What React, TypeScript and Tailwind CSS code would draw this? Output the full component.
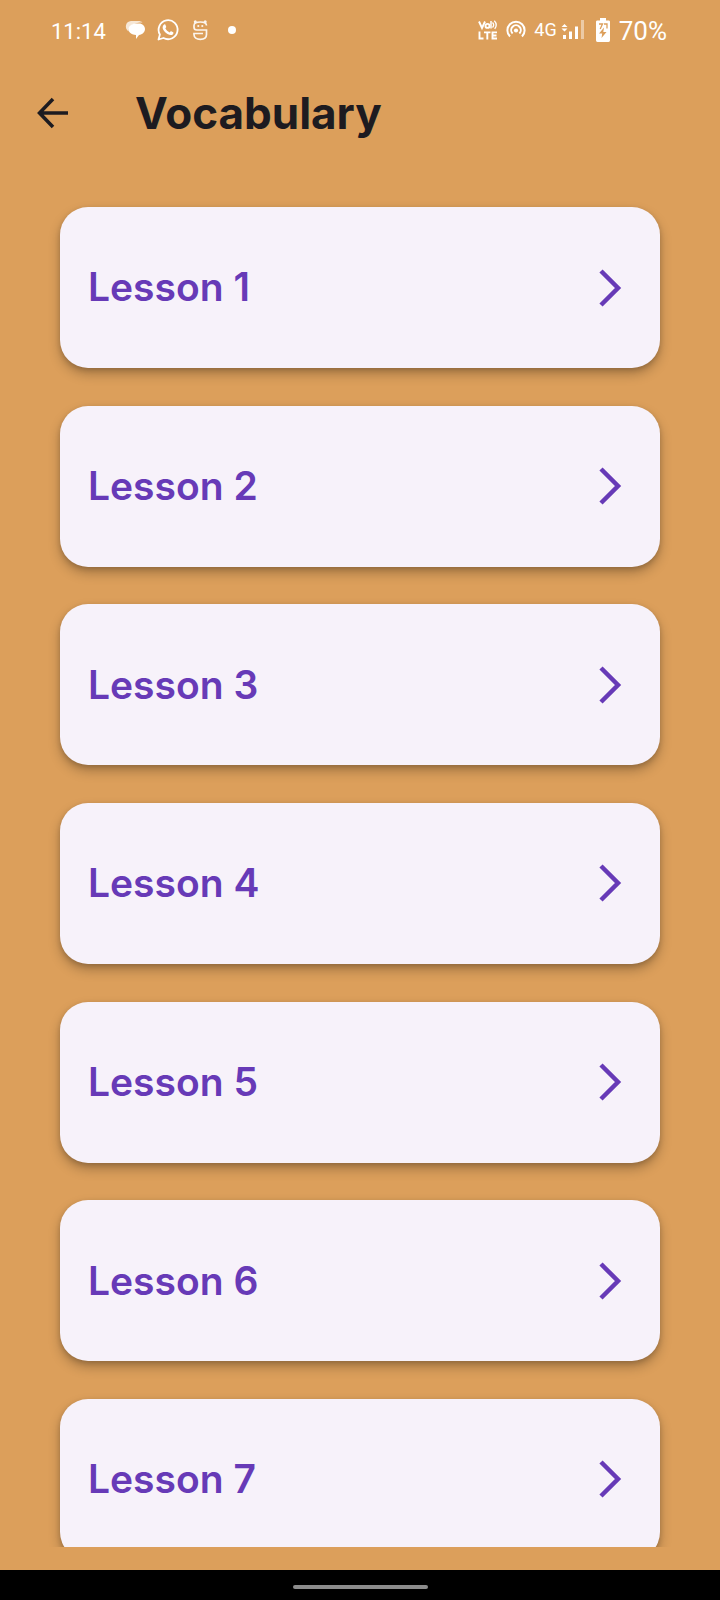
import React from "react";

const lessons = [1, 2, 3, 4, 5, 6, 7];

function ChatIcon() {
  return (
    <svg className="h-6 w-6" viewBox="0 0 24 24" fill="#fff" aria-hidden="true">
      <path d="M4.500 13.500C0 10 1.500 3.500 7 3h7c2 0 3.500.5 4.500 1.500C11 4.500 4.500 7 4.500 13.500z" opacity=".75" />
      <path d="M11.500 5.500H15c3.500 0 6 2.500 6 5.500s-2.500 5.500-6 5.900L12 21v-4C8 16.800 4.500 14.500 4.500 11.300S8 5.500 11.500 5.500z" />
    </svg>
  );
}

function WhatsAppIcon() {
  return (
    <svg className="h-6 w-6" viewBox="0 0 24 24" fill="none" stroke="#fff" aria-hidden="true">
      <path d="M2.500 21.500l1.400-5A9.500 9.500 0 1 1 7.500 20z" strokeWidth="1.800" strokeLinejoin="round" />
      <path
        d="M8.200 6.500c.5-.3 1-.2 1.200.3l.8 1.900c.1.300 0 .6-.9 1.600 1 2 2.300 3.200 4.300 4.100.9-1.100 1.200-1.400 1.600-1.200l2 1c.4.200.3 1.600-.5 2.200-1.200 1-3 .8-5.200-.4-2.500-1.400-4.400-4-4.800-5.800-.3-1.600.6-3.200 1.500-3.700z"
        fill="#fff"
        stroke="none"
      />
    </svg>
  );
}

function MascotIcon() {
  return (
    <svg className="h-6 w-6" viewBox="0 0 24 24" fill="none" stroke="#fff" strokeWidth="1.700" opacity=".9" aria-hidden="true">
      <path d="M18.500 7.500C18.500 5 16 4 12.300 4S6 5 6 7.500v1.800c0 1.700 1 2.700 2.800 2.700h9.700v4.500c0 3-2.500 4.800-6.200 4.800S6 19.500 6 16.500V15.500h9" />
      <circle cx="7.300" cy="3.800" r="1.500" fill="#fff" stroke="none" />
      <circle cx="17.200" cy="3.800" r="1.500" fill="#fff" stroke="none" />
      <circle cx="10.300" cy="8" r="1.100" fill="#fff" stroke="none" />
      <circle cx="14.300" cy="8" r="1.100" fill="#fff" stroke="none" />
    </svg>
  );
}

function HotspotIcon() {
  return (
    <svg className="h-5 w-5" viewBox="0 0 20 20" fill="none" stroke="#fff" strokeWidth="2" aria-hidden="true">
      <path d="M4 16.500a8.600 8.600 0 1 1 12 0" />
      <path d="M6.600 13.500a4.800 4.800 0 1 1 6.800 0" />
      <circle cx="10" cy="10.500" r="2.100" fill="#fff" stroke="none" />
    </svg>
  );
}

function VoLteIcon() {
  return (
    <svg className="h-5 w-5" viewBox="0 0 20 20" fill="none" stroke="#fff" strokeWidth="1.900" aria-label="VoLTE" role="img">
      <path d="M1 1.500L4 8l3-6.500" />
      <circle cx="9.500" cy="5.900" r="2" />
      <path d="M13 1v7.500" strokeWidth="1.500" />
      <path d="M14.500 2.500c1.500 1.600 1.500 3.400 0 5M16.300.8c2.600 2.800 2.600 5.200.4 8" strokeWidth="1.300" />
      <path d="M1.500 11.500v7h4M6 12.400h6.500M9.300 12.400V19.500M19 12.400h-4.500v6.100H19M14.500 15.500h4" />
    </svg>
  );
}

function SignalIcon() {
  return (
    <svg className="h-5 w-6" viewBox="0 0 24 20" fill="#fff" aria-hidden="true">
      <path d="M.5 7L3.500 4l3 3zM.5 8.500h6l-3 3zM2 15h3v4H2zM8 11.500h3V19H8zM14 6.500h3V19h-3z" />
      <path d="M20 0h3v19h-3z" opacity=".45" />
    </svg>
  );
}

function BatteryIcon() {
  return (
    <svg className="h-6 w-4" viewBox="0 0 16 24" aria-hidden="true">
      <path d="M5 0h6v2.500h2.500c1 0 1.500.5 1.500 1.500v18c0 1-.5 2-1.500 2h-11C1.500 24 1 23 1 22V4c0-1 .5-1.500 1.500-1.500H5z" fill="#fff" />
      <path d="M9 9.500L4 15.500h3.200L6.500 20l5-6H8.300z" fill="#dc9f5b" />
      <path d="M4 6h3.500L5.200 11M9 6h3v4.500" fill="none" stroke="#dc9f5b" strokeWidth="1.300" />
    </svg>
  );
}

function StatusBar() {
  return (
    <div className="flex h-[60px] shrink-0 items-center justify-between pr-[53px] pl-[51px] font-[Roboto,sans-serif] text-white">
      <div className="flex items-center">
        <time className="pt-0.5 text-[22px]">11:14</time>
        <div className="ml-[18px] flex items-center gap-2">
          <ChatIcon />
          <WhatsAppIcon />
          <MascotIcon />
          <span className="ml-2 h-2 w-2 rounded-full bg-white" />
        </div>
      </div>
      <div className="flex items-center">
        <VoLteIcon />
        <span className="ml-2 flex"><HotspotIcon /></span>
        <span className="ml-2 text-lg">4G</span>
        <span className="ml-1 flex"><SignalIcon /></span>
        <span className="ml-2.5 flex"><BatteryIcon /></span>
        <span className="ml-2 pt-0.5 text-[26px]">70%</span>
      </div>
    </div>
  );
}

function LessonCard({ number }: { number: number }) {
  return (
    <li>
      <button
        type="button"
        className="flex h-[161px] w-full items-center justify-between rounded-[28px] bg-[#f7f2fa] pr-[38px] pl-7 text-left text-[39px] font-semibold text-[#673ab7] shadow-[0_6px_12px_rgba(0,0,0,0.25),0_2px_5px_rgba(0,0,0,0.15)]"
      >
        <span>Lesson {number}</span>
        <svg className="h-10 w-6" viewBox="0 0 24 40" fill="none" stroke="currentColor" strokeWidth="4.500" aria-hidden="true">
          <path d="M3 3l17 17L3 37" />
        </svg>
      </button>
    </li>
  );
}

export default function App() {
  return (
    <div className="flex h-screen flex-col bg-[#dc9f5b] font-[Inter,sans-serif]">
      <StatusBar />
      <header className="flex h-[106px] shrink-0 items-center px-9">
        <button type="button" aria-label="Back" className="flex h-8 w-8 items-center justify-center text-[#1d1b20]">
          <svg className="h-8 w-8" viewBox="0 0 32 32" fill="none" stroke="currentColor" strokeWidth="3.500" aria-hidden="true">
            <path d="M17 2L3.500 16 17 30M3.500 16H32" />
          </svg>
        </button>
        <h1 className="ml-[67px] text-[44px] leading-none font-bold text-[#1d1b20]">Vocabulary</h1>
      </header>
      <main className="min-h-0 flex-1 overflow-hidden px-[60px] pt-[41px]">
        <ul className="flex min-h-[1353px] flex-col justify-between">
          {lessons.map((n) => (
            <LessonCard key={n} number={n} />
          ))}
        </ul>
      </main>
      <footer className="mt-[23px] flex h-[30px] shrink-0 items-center justify-center bg-black pt-1">
        <div className="h-1 w-[135px] rounded-full bg-[#8c8c8c]" />
      </footer>
    </div>
  );
}
